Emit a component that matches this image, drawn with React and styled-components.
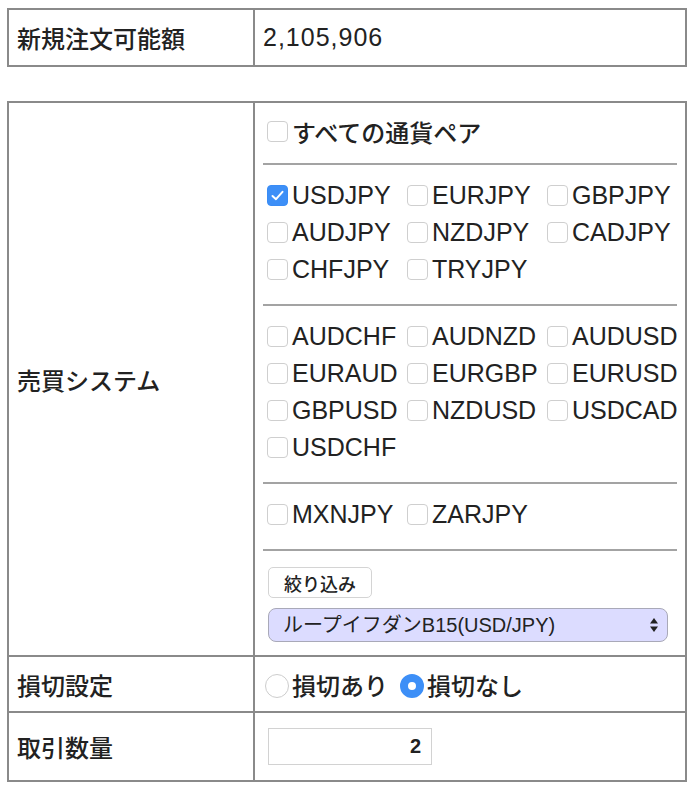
import React from 'react'
import styled, { createGlobalStyle } from 'styled-components'

const GlobalStyle = createGlobalStyle`
  body {
    margin: 0;
    background: #fff;
    color: #222;
    font-family: "Liberation Sans", "Noto Sans CJK JP", sans-serif;
  }
`

const Page = styled.div`
  padding: 8px 0 0 7px;
`

const Table = styled.table`
  width: 680px;
  table-layout: fixed;
  border-collapse: collapse;
  border: 2px solid #858585;
  margin-bottom: ${p => p.$gap || 0}px;
`

const Cell = styled.td`
  border: 2px solid #8a8a8a;
  padding: 0 8px;
  height: ${p => p.$h ? `${p.$h}px` : 'auto'};
  vertical-align: middle;
  font-size: 24px;
  font-weight: 500;
`

const Value = styled.span`
  font-size: 25px;
  font-weight: 400;
  letter-spacing: 1px;
`

const Rule = styled.div`
  height: 2px;
  background: #a3a3a3;
`

const AllRow = styled.div`
  padding: 10px 0 13px;
`

const Group = styled.div`
  display: grid;
  grid-template-columns: repeat(3, 140px);
  padding: 12px 0 16px;
`

const Pair = styled.label`
  display: flex;
  align-items: center;
  height: 37px;
  white-space: nowrap;
  font-size: ${p => p.$jp ? 24 : 25}px;
  font-weight: ${p => p.$jp ? 500 : 400};
`

const Box = styled.span`
  flex: none;
  display: inline-flex;
  align-items: center;
  justify-content: center;
  width: 21px;
  height: 21px;
  margin: 0 4px 0 4px;
  box-sizing: border-box;
  border-radius: 4px;
  border: 1px solid ${p => p.$on ? '#3a8cf5' : '#cfcfcf'};
  background: ${p => p.$on ? '#3d8ff7' : '#fff'};
`

const Controls = styled.div`
  display: flex;
  flex-direction: column;
  align-items: flex-start;
  gap: 10px;
  padding: 16px 0 13px 5px;
`

const Button = styled.button`
  height: 31px;
  width: 104px;
  padding: 0;
  background: #fff;
  border: 1px solid #d4d4d4;
  border-radius: 5px;
  font-family: "Noto Sans CJK JP", sans-serif;
  font-size: 18px;
  font-weight: 500;
  color: #222;
`

const SelectWrap = styled.div`
  position: relative;
  width: 400px;
`

const Select = styled.select`
  appearance: none;
  -webkit-appearance: none;
  width: 100%;
  height: 34px;
  padding: 0 30px 0 14px;
  background: #dcdcff;
  border: 1px solid #a9a9b8;
  border-radius: 8px;
  font-family: "Liberation Sans", "Noto Sans CJK JP", sans-serif;
  font-size: 20px;
  color: #222;
`

const Arrows = styled.svg`
  position: absolute;
  right: 9px;
  top: 9px;
  pointer-events: none;
`

const RadioRow = styled.div`
  display: flex;
  align-items: center;
  padding-left: 2px;
`

const Radio = styled.span`
  flex: none;
  width: 24px;
  height: 24px;
  box-sizing: border-box;
  margin: 4px 3px 0 ${p => p.$first ? 0 : 12}px;
  border-radius: 50%;
  border: ${p => p.$on ? '8px solid #3d8ff7' : '1px solid #cdcdcd'};
  background: #fff;
`

const Amount = styled.input`
  display: block;
  width: 164px;
  height: 37px;
  margin-left: 5px;
  box-sizing: border-box;
  border: 1px solid #d2d2d2;
  padding: 0 10px 0 0;
  text-align: right;
  font-family: "Liberation Sans", sans-serif;
  font-size: 20px;
  font-weight: bold;
  color: #222;
`

const Check = () => (
  <svg width="13" height="11" viewBox="0 0 13 11">
    <path d="M1.5 6 L5 9.2 L11.5 1.8" fill="none" stroke="#fff" strokeWidth="2" strokeLinecap="round" strokeLinejoin="round" />
  </svg>
)

const groups = [
  ['USDJPY', 'EURJPY', 'GBPJPY', 'AUDJPY', 'NZDJPY', 'CADJPY', 'CHFJPY', 'TRYJPY'],
  ['AUDCHF', 'AUDNZD', 'AUDUSD', 'EURAUD', 'EURGBP', 'EURUSD', 'GBPUSD', 'NZDUSD', 'USDCAD', 'USDCHF'],
  ['MXNJPY', 'ZARJPY'],
]

const App = () => {
  return (
    <Page>
      <GlobalStyle />
      <Table $gap={34}>
        <colgroup><col style={{ width: 246 }} /><col /></colgroup>
        <tbody>
          <tr>
            <Cell $h={55}>新規注文可能額</Cell>
            <Cell><Value>2,105,906</Value></Cell>
          </tr>
        </tbody>
      </Table>
      <Table>
        <colgroup><col style={{ width: 246 }} /><col /></colgroup>
        <tbody>
          <tr>
            <Cell>売買システム</Cell>
            <Cell>
              <AllRow>
                <Pair $jp><Box />すべての通貨ペア</Pair>
              </AllRow>
              {groups.map((g, i) => (
                <React.Fragment key={i}>
                  <Rule />
                  <Group>
                    {g.map(name => (
                      <Pair key={name}>
                        <Box $on={name === 'USDJPY'}>{name === 'USDJPY' && <Check />}</Box>
                        {name}
                      </Pair>
                    ))}
                  </Group>
                </React.Fragment>
              ))}
              <Rule />
              <Controls>
                <Button>絞り込み</Button>
                <SelectWrap>
                  <Select defaultValue="b15">
                    <option value="b15">ループイフダンB15(USD/JPY)</option>
                  </Select>
                  <Arrows width="10" height="16" viewBox="0 0 10 16">
                    <path d="M5 1 L9 6.5 H1 Z" fill="#222" />
                    <path d="M5 15 L9 9.5 H1 Z" fill="#222" />
                  </Arrows>
                </SelectWrap>
              </Controls>
            </Cell>
          </tr>
          <tr>
            <Cell $h={54}>損切設定</Cell>
            <Cell>
              <RadioRow>
                <Radio $first />損切あり
                <Radio $on />損切なし
              </RadioRow>
            </Cell>
          </tr>
          <tr>
            <Cell $h={67}>取引数量</Cell>
            <Cell>
              <Amount defaultValue="2" />
            </Cell>
          </tr>
        </tbody>
      </Table>
    </Page>
  )
}

export default App
